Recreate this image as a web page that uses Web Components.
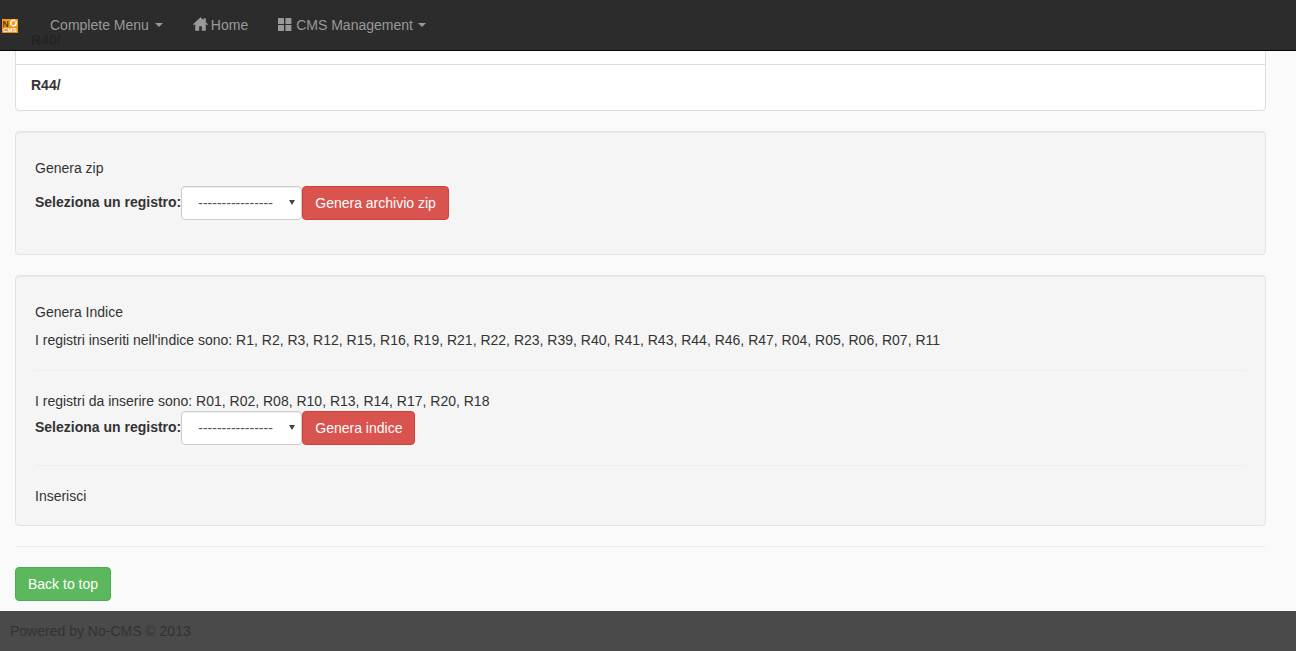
<!DOCTYPE html>
<html lang="it">
<head>
<meta charset="utf-8">
<title>No-CMS</title>
<style>
html,body{margin:0;padding:0;height:100%;overflow:hidden}
body{background:#fafafa;color:#333;font:14px/20px "Liberation Sans",Arial,sans-serif}
</style>
</head>
<body>
<cms-page>
  <cms-navbar slot="nav">
    <cms-nav-item caret>Complete Menu</cms-nav-item>
    <cms-nav-item icon="home">Home</cms-nav-item>
    <cms-nav-item icon="grid" caret style="--caret-gap:5px">CMS Management</cms-nav-item>
  </cms-navbar>
  <cms-list>
    <cms-list-row>R40/</cms-list-row>
    <cms-list-row>R44/</cms-list-row>
  </cms-list>
  <cms-well>
    <cms-text>Genera zip</cms-text>
    <cms-reg-form style="margin-top:8px;margin-bottom:15px">Genera archivio zip</cms-reg-form>
  </cms-well>
  <cms-well>
    <cms-text>Genera Indice</cms-text>
    <cms-text style="margin-top:8px">I registri inseriti nell'indice sono: R1, R2, R3, R12, R15, R16, R19, R21, R22, R23, R39, R40, R41, R43, R44, R46, R47, R04, R05, R06, R07, R11</cms-text>
    <cms-rule></cms-rule>
    <cms-text>I registri da inserire sono: R01, R02, R08, R10, R13, R14, R17, R20, R18</cms-text>
    <cms-reg-form>Genera indice</cms-reg-form>
    <cms-rule></cms-rule>
    <cms-text>Inserisci</cms-text>
  </cms-well>
  <cms-rule class="page"></cms-rule>
  <cms-btn kind="success">Back to top</cms-btn>
  <cms-footer slot="footer">Powered by No-CMS © 2013</cms-footer>
</cms-page>
<script>
function def(name, css, html, init){
  customElements.define(name, class extends HTMLElement{
    constructor(){
      super();
      const r=this.attachShadow({mode:'open'});
      r.innerHTML='<style>'+css+'</style>'+html;
    }
    connectedCallback(){ if(init) init(this, this.shadowRoot); }
  });
}
def('cms-page',
  `:host{display:flex;flex-direction:column;height:651px;position:relative;overflow:hidden}
   main{flex:1;padding:19px 30px 0 15px;display:flex;flex-direction:column;align-items:stretch}
   .over{position:absolute;top:0;left:0;right:0;z-index:10}`,
  `<div class="over"><slot name="nav"></slot></div><main><slot></slot></main><slot name="footer"></slot>`);
def('cms-navbar',
  `:host{display:flex;align-items:stretch;height:50px;background:rgba(34,34,34,.955);border-bottom:1px solid #080808;padding-left:0}
   .brand{width:35px;display:flex;align-items:center;flex:none}
   svg{display:block;margin:2px 0 0 2px}
   text{font-family:"Liberation Sans",Arial,sans-serif;font-weight:700}`,
  `<div class="brand"><svg width="16" height="14" viewBox="0 0 16 14">
     <rect width="16" height="14" fill="#f39a1c"/>
     <rect y="8" width="16" height="6" fill="#e98d14"/>
     <text x="0.5" y="7.6" font-size="8.6" fill="#5a3c10">N</text>
     <circle cx="11.5" cy="4" r="2.7" fill="none" stroke="#fff" stroke-width="1.4"/>
     <path d="M8.5 7.2L14.5 .8" stroke="#f39a1c" stroke-width="1"/>
     <text x="1" y="13.2" font-size="5.6" fill="#fff" textLength="14" lengthAdjust="spacingAndGlyphs">CMS</text>
   </svg></div><slot></slot>`);
def('cms-nav-item',
  `:host{display:flex;align-items:center;padding:0 15px;color:#999;font-size:14px;white-space:nowrap;height:50px}
   svg{display:block;flex:none;fill:#999}
   .caret{display:inline-block;width:0;height:0;margin-left:var(--caret-gap,6px);border-top:4px solid #999;border-left:4px solid transparent;border-right:4px solid transparent}`,
  `<span id="i" style="display:contents"></span><slot></slot><span id="c" style="display:contents"></span>`,
  (el,r)=>{
    const icon=el.getAttribute('icon');
    if(icon==='home') r.getElementById('i').innerHTML='<svg width="15" height="14" viewBox="0 0 15 14" style="margin-right:3px;margin-top:-2px"><path d="M7.5 0.3L0 7.3l.9.9L2.2 7v6.7h4V9.3h2.6v4.4h4V7l1.3 1.2.9-.9-2.2-2.1V1.2h-2.2v1.9z"/></svg>';
    if(icon==='grid') r.getElementById('i').innerHTML='<svg width="14" height="13" viewBox="0 0 14 13" style="margin-right:4px;margin-top:-1px"><rect width="6" height="6" rx=".6"/><rect x="7.4" width="6" height="6" rx=".6"/><rect y="7" width="6" height="6" rx=".6"/><rect x="7.4" y="7" width="6" height="6" rx=".6"/></svg>';
    if(el.hasAttribute('caret')) r.getElementById('c').innerHTML='<span class="caret"></span>';
  });
def('cms-list',
  `:host{display:block;background:#fff;border:1px solid #ddd;border-radius:4px;margin-bottom:20px}`,
  `<slot></slot>`);
def('cms-list-row',
  `:host{display:block;padding:10px 15px;height:24px;line-height:20px;font-weight:700;color:#333}
   :host(:not(:last-child)){border-bottom:1px solid #ddd}
   :host(:last-child){padding-bottom:11px}`,
  `<slot></slot>`);
def('cms-well',
  `:host{display:block;background:#f5f5f5;border:1px solid #e3e3e3;border-radius:4px;box-shadow:inset 0 1px 1px rgba(0,0,0,.05);padding:26px 19px 19px;margin-bottom:20px}`,
  `<slot></slot>`);
def('cms-text',`:host{display:block;line-height:20px}`,`<slot></slot>`);
def('cms-rule',
  `:host{display:block;height:1px;background:#eee;margin:20px 0}
   :host(.page){margin:0 0 20px}`,``);
def('cms-btn',
  `:host{display:inline-block;align-self:flex-start;box-sizing:border-box;height:34px;padding:6px 12px;border:1px solid;border-radius:4px;line-height:20px;color:#fff;white-space:nowrap}
   :host([kind=danger]){background:#d9534f;border-color:#d43f3a}
   :host([kind=success]){background:#5cb85c;border-color:#4cae4c}`,
  `<slot></slot>`);
def('cms-reg-form',
  `:host{display:flex;align-items:center}
   b{font-weight:700;margin-bottom:2px}
   .sel{position:relative;display:block;width:121px;height:34px;flex:none}
   .sel i{position:absolute;left:108px;top:14px;width:0;height:0;border-top:5px solid #444;border-left:3.5px solid transparent;border-right:3.5px solid transparent;pointer-events:none}
   select{appearance:none;-webkit-appearance:none;display:block;box-sizing:border-box;width:121px;height:34px;padding:6px 12px 6px 16px;font:14px/20px "Liberation Sans",Arial,sans-serif;color:#555;background:#fff;border:1px solid #ccc;border-radius:4px;box-shadow:inset 0 1px 1px rgba(0,0,0,.075);margin:0}`,
  `<b>Seleziona un registro:</b><span class="sel"><select><option>----------------</option></select><i></i></span><cms-btn kind="danger"><slot></slot></cms-btn>`);
def('cms-footer',
  `:host{display:block;height:40px;background:#4a4a4a;color:#333;line-height:40px;padding-left:10px}`,
  `<slot></slot>`);
</script>
</body>
</html>
